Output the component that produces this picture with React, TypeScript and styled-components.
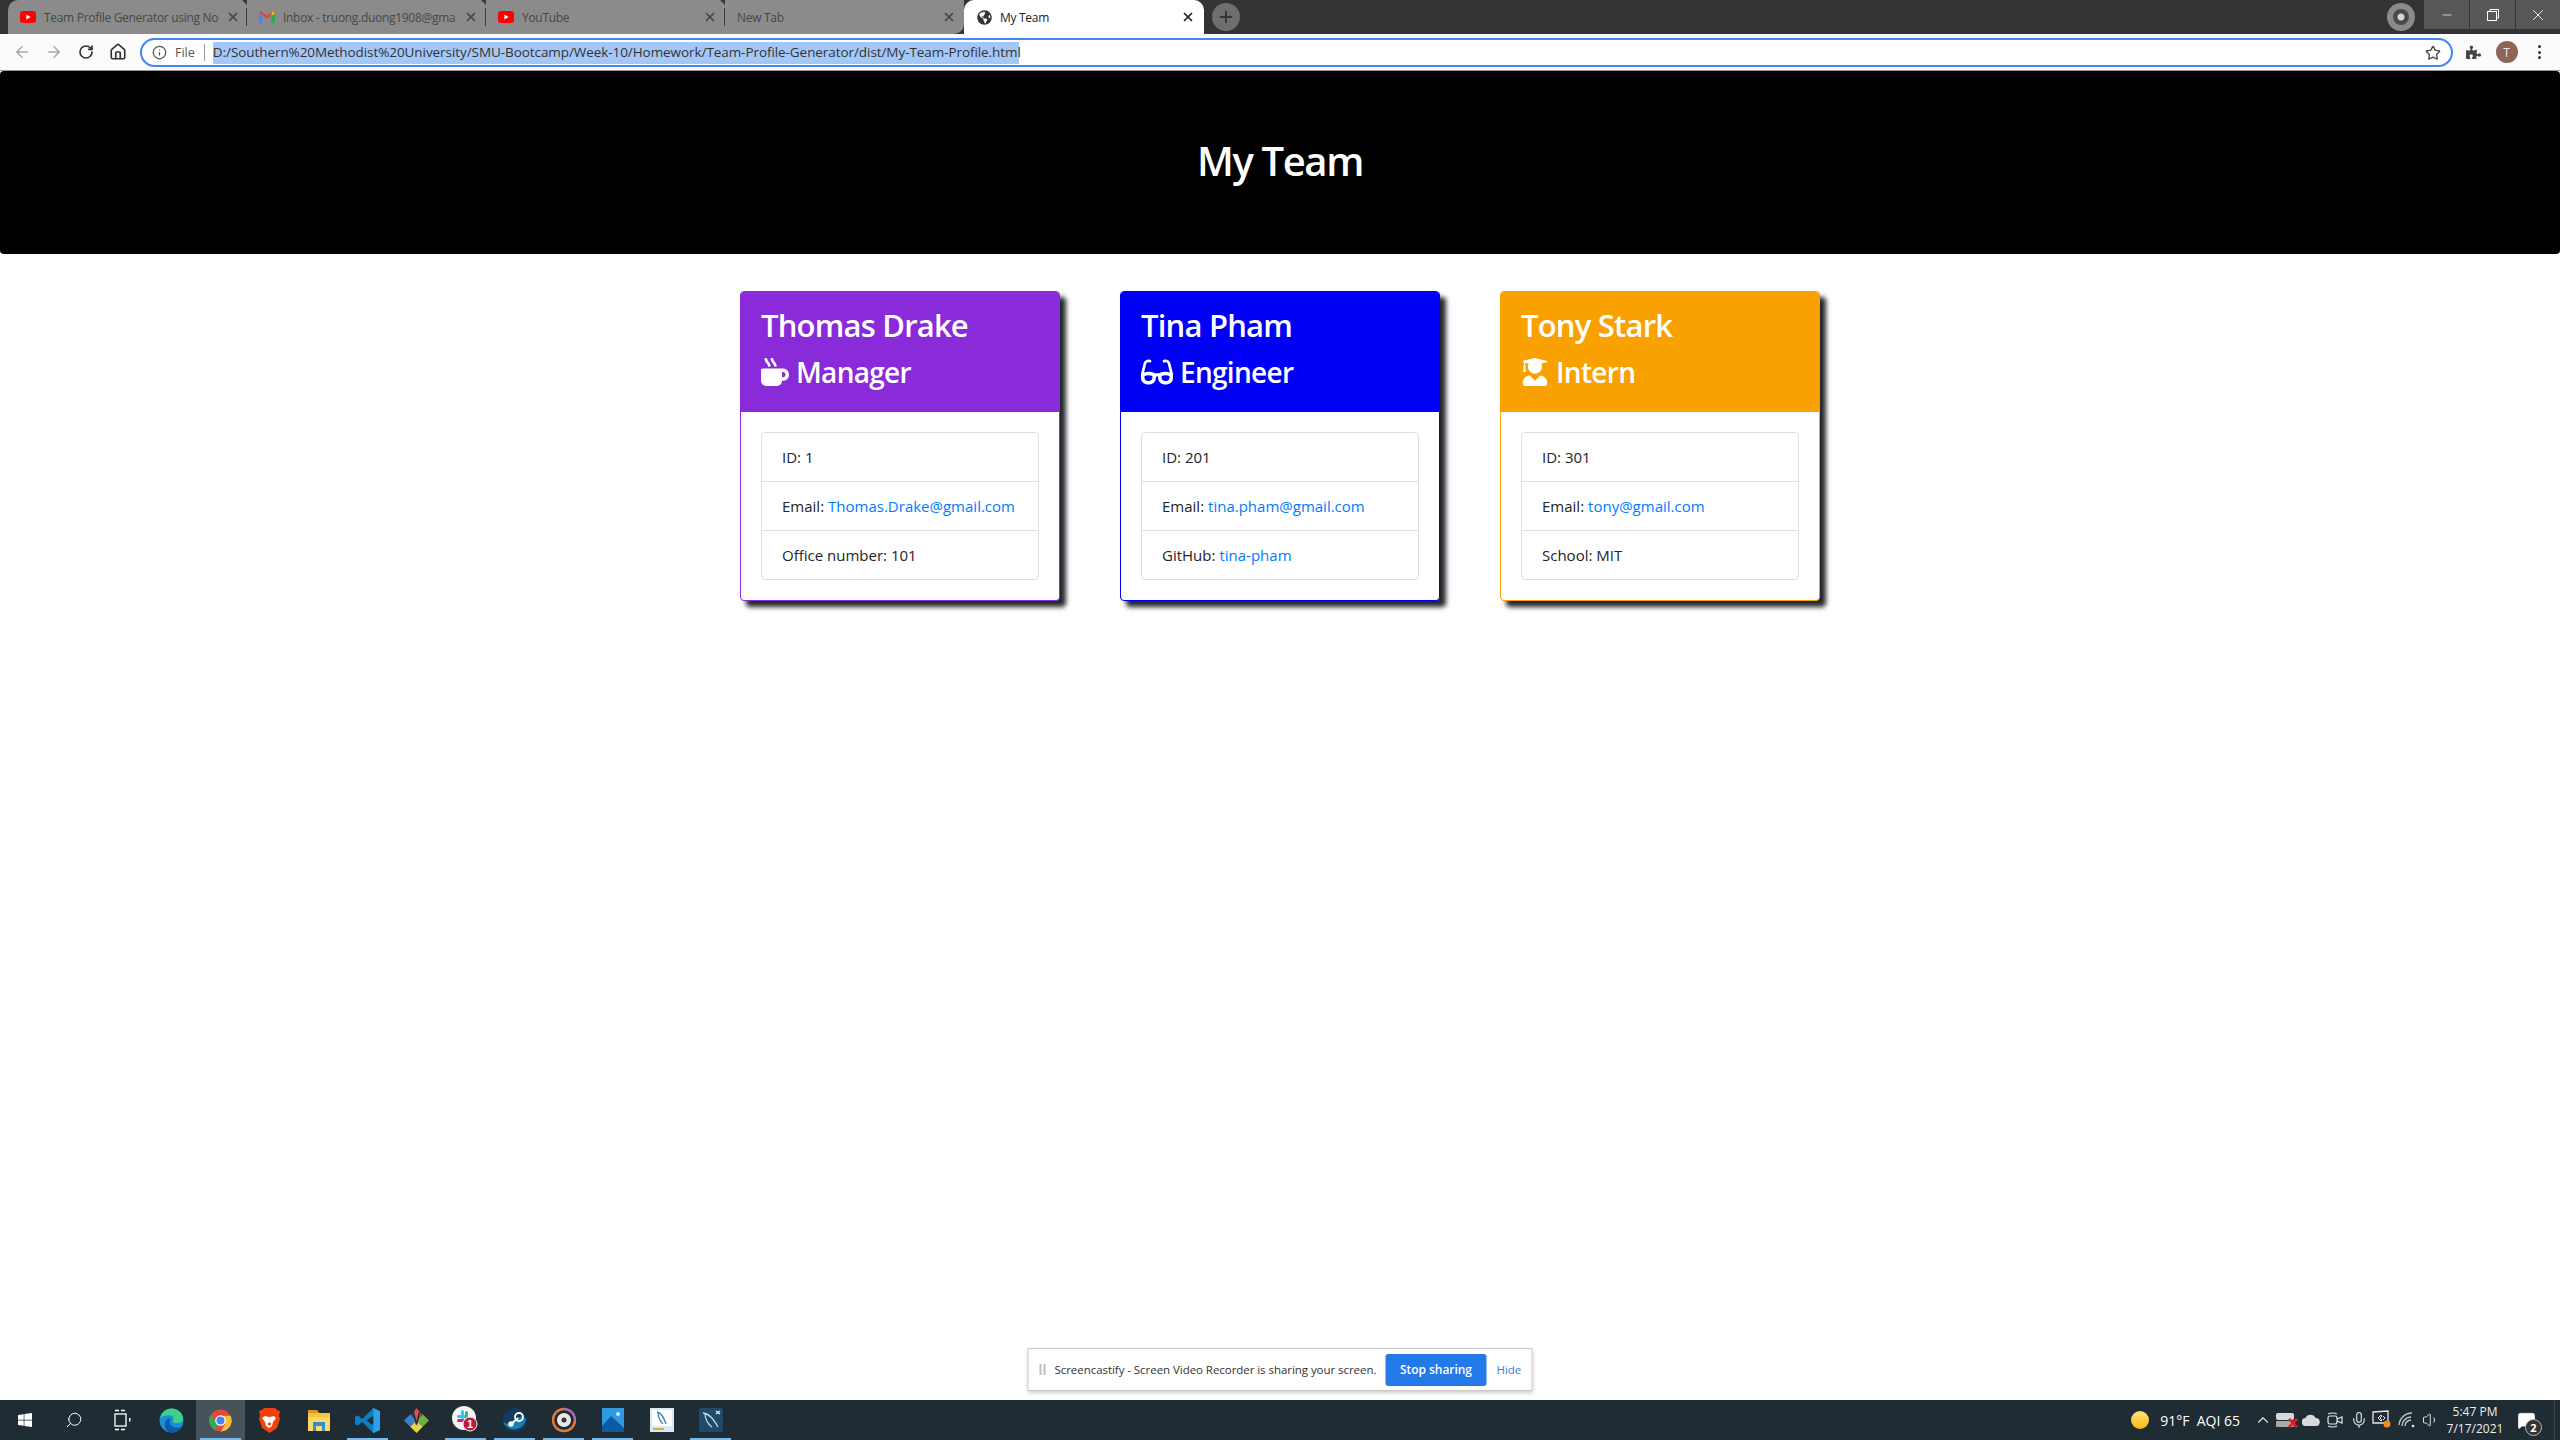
import React from 'react'
import styled, { createGlobalStyle } from 'styled-components'
import { FaMugHot, FaGlasses, FaUserGraduate, FaGlobeAmericas, FaPuzzlePiece, FaWindows } from 'react-icons/fa'
import { ArrowLeft, ArrowRight, RotateCw, Home, Info, Star, X, Plus, Minus, Search, ChevronUp, Mic, Volume1, MessageSquare } from 'lucide-react'

const FONT = '"Open Sans", "Noto Sans", "Liberation Sans", sans-serif'

const GlobalStyle = createGlobalStyle`
  html, body { margin: 0; padding: 0; background: #fff; }
  * { box-sizing: border-box; }
  body { font-family: ${FONT}; color: #212529; }
`

const Screen = styled.div`
  width: 2560px;
  height: 1440px;
  display: flex;
  flex-direction: column;
  overflow: hidden;
`

const TitleBar = styled.div`
  height: 34px;
  flex: none;
  display: flex;
  background: #333;
  padding-left: 8px;
`

const Tab = styled.div<{ $active?: boolean; $divider?: boolean }>`
  position: relative;
  width: ${p => (p.$active ? 240 : 239)}px;
  height: 34px;
  flex: none;
  display: flex;
  align-items: center;
  padding-left: 12px;
  padding-right: ${p => (p.$active ? 9 : 8)}px;
  gap: 8px;
  font-size: 12px;
  letter-spacing: -0.3px;
  color: ${p => (p.$active ? '#222' : '#474747')};
  background: ${p => (p.$active ? '#fff' : '#8b8b8b')};
  border-radius: ${p => (p.$active ? '10px 10px 0 0' : '0')};
  &:first-child { border-radius: 10px 0 0 0; }
  &:nth-child(4) { border-radius: 0 0 10px 0; }
  ${p =>
    p.$divider &&
    `&::after {
      content: '';
      position: absolute;
      right: 0;
      top: 8px;
      bottom: 8px;
      width: 1px;
      background: #3d3d3d;
    }
    &::before {
      content: '';
      position: absolute;
      right: -5px;
      top: 0;
      border: 5px solid transparent;
      border-top-color: #3a3a3a;
    }`}
`

const TabLabel = styled.span`
  flex: 1;
  white-space: nowrap;
`

const TabClose = styled(X)`
  flex: none;
  width: 14px;
  height: 14px;
  stroke-width: 3;
`

const Favicon = styled.span<{ $color?: string }>`
  flex: none;
  width: 16px;
  height: 16px;
  display: flex;
  align-items: center;
  justify-content: center;
  color: ${p => p.$color || '#333'};
`

const NewTabButton = styled.div`
  width: 28px;
  height: 28px;
  margin: 3px 0 0 8px;
  flex: none;
  border-radius: 50%;
  background: #6e6e6e;
  color: #333;
  display: flex;
  align-items: center;
  justify-content: center;
`

const TitleSpacer = styled.div`
  flex: 1;
`

const ProfileBadge = styled.div`
  width: 28px;
  height: 28px;
  margin: 3px 8px 0 0;
  border-radius: 50%;
  background: #8a8a8a;
  display: flex;
  align-items: center;
  justify-content: center;
  &::after {
    content: '';
    width: 16px;
    height: 16px;
    border-radius: 50%;
    background: radial-gradient(circle, #d5d5d5 0 3px, #4a4a4a 4px);
  }
`

const WindowButton = styled.div`
  width: 46px;
  height: 29px;
  background: #575757;
  border-left: 1px solid #333;
  color: #fff;
  display: flex;
  align-items: center;
  justify-content: center;
  &:last-child { width: 45px; }
`

const Toolbar = styled.div`
  height: 37px;
  flex: none;
  display: flex;
  align-items: flex-start;
  padding: 4px 6px 0;
  background: #fbfbfb;
  border-bottom: 1px solid #9a9a9a;
`

const ToolButton = styled.div<{ $color?: string; $width?: number }>`
  width: ${p => p.$width || 32}px;
  height: 28px;
  flex: none;
  display: flex;
  align-items: center;
  justify-content: center;
  color: ${p => p.$color || '#333'};
`

const Omnibox = styled.div`
  width: 2313px;
  height: 29px;
  flex: none;
  margin: 0 4px 0 6px;
  padding: 0 10px 0 10px;
  display: flex;
  align-items: center;
  background: #fff;
  border: 2.5px solid #4285f4;
  border-radius: 15px;
  font-size: 13px;
  color: #333;
`

const FileChip = styled.span`
  margin-left: 8px;
  padding-right: 9px;
  color: #555;
  font-size: 12.5px;
  border-right: 1px solid #999;
  line-height: 17px;
`

const UrlText = styled.span`
  margin-left: 8px;
  width: 806px;
  height: 22px;
  line-height: 21px;
  flex: none;
  background: #a3c8f7;
  white-space: nowrap;
  font-size: 13.5px;
  letter-spacing: -0.07px;
`

const Avatar = styled.div`
  width: 22px;
  height: 22px;
  border-radius: 50%;
  background: #8e6558;
  color: #eee;
  font-size: 12px;
  display: flex;
  align-items: center;
  justify-content: center;
`

const Dots = styled.div`
  display: flex;
  flex-direction: column;
  gap: 2.5px;
  span {
    width: 3px;
    height: 3px;
    border-radius: 50%;
    background: #333;
  }
`

const Banner = styled.header`
  height: 183px;
  flex: none;
  padding-bottom: 3px;
  background: #000;
  color: #fff;
  border-radius: 4px;
  display: flex;
  align-items: center;
  justify-content: center;
`

const PageTitle = styled.h1`
  margin: 0;
  font-size: 40px;
  font-weight: 600;
  line-height: 48px;
  letter-spacing: -1.4px;
`

const Main = styled.main`
  position: relative;
  flex: 1;
  background: #fff;
`

const CardRow = styled.section`
  display: flex;
  justify-content: center;
  gap: 60px;
  padding-top: 37px;
`

const Card = styled.article<{ $color: string }>`
  width: 320px;
  height: 310px;
  background: #fff;
  border: 1px solid ${p => p.$color};
  border-radius: 4px;
  box-shadow: 6px 6px 5px #23272b;
`

const CardHead = styled.div<{ $color: string }>`
  height: 120px;
  background: ${p => p.$color};
  color: #fff;
  padding: 12px 20px 0;
  border-radius: 3px 3px 0 0;
`

const Name = styled.h2`
  margin: 0 0 6px;
  font-size: 31px;
  line-height: 42px;
  font-weight: 600;
  letter-spacing: -0.8px;
  white-space: nowrap;
`

const Role = styled.h3`
  margin: 0;
  display: flex;
  align-items: center;
  gap: 7px;
  font-size: 28px;
  line-height: 40px;
  font-weight: 600;
  letter-spacing: -0.7px;
  svg { flex: none; }
`

const CardBody = styled.div`
  padding: 20px;
`

const InfoList = styled.ul`
  margin: 0;
  padding: 0;
  list-style: none;
  border: 1px solid rgba(0, 0, 0, 0.125);
  border-radius: 4px;
`

const InfoRow = styled.li`
  height: 49px;
  padding: 0 20px;
  display: flex;
  align-items: center;
  gap: 4px;
  font-size: 15px;
  white-space: nowrap;
  & + & { border-top: 1px solid rgba(0, 0, 0, 0.125); }
  &:first-child { height: 48px; }
`

const InfoLink = styled.a`
  color: #007bff;
  text-decoration: none;
`

const ShareBar = styled.div`
  position: absolute;
  left: 50%;
  bottom: 9px;
  transform: translateX(-50%);
  width: 505px;
  height: 43px;
  display: flex;
  align-items: center;
  padding: 0 11px 0 11px;
  background: #fff;
  border: 1px solid #c6c6c6;
  box-shadow: 0 2px 4px rgba(0, 0, 0, 0.2);
  font-size: 11.5px;
  letter-spacing: -0.05px;
  color: #333;
`

const Grip = styled.span`
  width: 6px;
  height: 11px;
  flex: none;
  margin-right: 9px;
  border-left: 2px solid #bbb;
  border-right: 2px solid #bbb;
`

const ShareText = styled.span`
  white-space: nowrap;
  width: 331px;
  flex: none;
`

const StopButton = styled.div`
  width: 101px;
  height: 32px;
  flex: none;
  background: #2479e8;
  color: #fff;
  border-radius: 3px;
  font-weight: 600;
  font-size: 12px;
  display: flex;
  align-items: center;
  justify-content: center;
`

const HideLink = styled.span`
  margin-left: 10px;
  color: #3b7de0;
`

const Taskbar = styled.footer`
  height: 40px;
  flex: none;
  display: flex;
  align-items: stretch;
  background: #1f2c33;
  color: #fff;
`

const TaskItem = styled.div<{ $running?: boolean; $active?: boolean }>`
  position: relative;
  width: 49px;
  flex: none;
  display: flex;
  align-items: center;
  justify-content: center;
  background: ${p => (p.$active ? '#46535a' : 'transparent')};
  ${p =>
    p.$running &&
    `&::after {
      content: '';
      position: absolute;
      left: 4px;
      right: 4px;
      bottom: 0;
      height: 2px;
      background: #76b9ed;
    }`}
`

const Tray = styled.div`
  margin-left: auto;
  display: flex;
  align-items: center;
  padding-right: 5px;
  font-size: 14px;
`

const Sun = styled.span`
  width: 18px;
  height: 18px;
  border-radius: 50%;
  background: linear-gradient(#ffe27a, #fdb813);
  margin-right: 11px;
`

const Weather = styled.span`
  margin-right: 11px;
  white-space: nowrap;
`

const TrayIcon = styled.span`
  width: 24px;
  flex: none;
  display: flex;
  align-items: center;
  justify-content: center;
  color: #e6e6e6;
`

const Clock = styled.div`
  width: 64px;
  text-align: center;
  font-size: 12px;
  line-height: 17px;
  color: #eee;
`

const Notify = styled.span`
  position: relative;
  width: 48px;
  padding-right: 8px;
  display: flex;
  align-items: center;
  justify-content: center;
  border-right: 1px solid #444;
  align-self: stretch;
`

const NotifyCount = styled.span`
  position: absolute;
  right: 12px;
  bottom: 4px;
  width: 17px;
  height: 17px;
  border-radius: 50%;
  background: #333;
  border: 1.5px solid #bbb;
  font-size: 11px;
  font-weight: 700;
  display: flex;
  align-items: center;
  justify-content: center;
`

const YouTubeIcon = () => (
  <svg width="16" height="12" viewBox="0 0 16 12">
    <rect width="16" height="12" rx="3" fill="#f00" />
    <path d="M6.4 3.4 10.6 6 6.4 8.6z" fill="#fff" />
  </svg>
)

const GmailIcon = () => (
  <svg width="16" height="12" viewBox="0 0 16 12">
    <path d="M0 1.5V12h3.5V5z" fill="#4285f4" />
    <path d="M16 1.5V12h-3.5V5z" fill="#34a853" />
    <path d="M0 1.5 8 7.5l8-6L14.5 0 8 4.8 1.5 0z" fill="#ea4335" />
    <path d="M12.5 2.2V5L16 2.5 14.5 0z" fill="#fbbc04" />
  </svg>
)

const EdgeIcon = () => (
  <svg width="25" height="25" viewBox="0 0 24 24">
    <circle cx="12" cy="12" r="11.5" fill="#1a8fd8" />
    <path d="M1 11C2 4 7 .5 12 .5c6 0 11 4.500 11 10 0 3-3 4-6 4-2.500 0-4-1-4-2.500 2-1 1-5-3-5-4 0-9 1.500-9 4z" fill="#3fd08a" />
    <path d="M9 23c-3-2-4-6-3-9 1-3 4-5 5-3-2 3 0 8 7 8 1 0 3-.5 4-1-2 4-9 7-13 5z" fill="#0c59a4" />
  </svg>
)

const ChromeIcon = () => (
  <svg width="23" height="23" viewBox="0 0 24 24">
    <circle cx="12" cy="12" r="11.500" fill="#e8453c" />
    <path d="M12 12 2 18a11.500 11.500 0 0 1 0-12l5 6z" fill="#34a853" />
    <path d="M2 18l5-6 5 0-5.500 10.500A11.500 11.500 0 0 1 2 18z" fill="#34a853" />
    <path d="M12 7h10.500a11.500 11.500 0 0 1-10 16.500L17 15z" fill="#fbc02d" />
    <circle cx="12" cy="12" r="5.500" fill="#fff" />
    <circle cx="12" cy="12" r="4.200" fill="#4285f4" />
  </svg>
)

const BraveIcon = () => (
  <svg width="21" height="25" viewBox="0 0 21 25">
    <path d="M5 0h11l2 2 3 1-1 5 1 3-3 9-7.500 5L3 20 0 11l1-3-1-5 3-1z" fill="#f1420b" />
    <path d="M6 8l4 1h1l4-1 2 2-3 4-1 4-3 2-3-2-1-4-3-4z" fill="#fff" />
    <path d="M10.500 14l-2 2 2 2 2-2z" fill="#f1420b" />
  </svg>
)

const FolderIcon = () => (
  <svg width="22" height="24" viewBox="0 0 22 24">
    <path d="M0 2h9l2 3h11v18H0z" fill="#f6c343" />
    <path d="M0 2h9l1.500 3H0z" fill="#d99a1c" />
    <rect x="0" y="9" width="22" height="14" fill="#ffd966" />
    <rect x="5" y="14" width="12" height="9" fill="#2f8fd0" />
    <rect x="8" y="18" width="6" height="5" fill="#ffd966" />
  </svg>
)

const VsCodeIcon = () => (
  <svg width="25" height="25" viewBox="0 0 24 24">
    <path d="M17.500 0 24 3v18l-6.500 3L7 13.500 2.500 17 0 15.500V8.500L2.500 7 7 10.500z" fill="#0a7fc9" />
    <path d="M17.500 0 24 3v18l-6.500 3z" fill="#2aa3ee" />
    <path d="M17.500 7.500 11 12l6.500 4.500z" fill="#1f2c33" />
  </svg>
)

const GitIcon = () => (
  <svg width="25" height="25" viewBox="0 0 24 24">
    <path d="M12 6 18 12 12 18 6 12z" fill="#27303a" />
    <path d="M6 6 12 12 6 18 0 12z" fill="#3f7fc9" />
    <path d="M18 6 24 12 18 18 12 12z" fill="#6fae3f" />
    <path d="M12 12 18 18 12 24 6 18z" fill="#e9d44a" />
    <path d="M12 0 17 6 12 12 8 6z" fill="#d9534f" />
    <path d="M9 4l3 12 3-12" stroke="#1f2c33" strokeWidth="1.500" fill="none" />
  </svg>
)

const SlackIcon = () => (
  <svg width="28" height="28" viewBox="0 0 28 28">
    <circle cx="12" cy="12" r="12" fill="#f3f3f3" />
    <rect x="5" y="9" width="9" height="3" rx="1.500" fill="#36c5f0" />
    <rect x="9" y="4" width="3" height="9" rx="1.500" fill="#36c5f0" />
    <rect x="13" y="5" width="3" height="8" rx="1.500" fill="#2eb67d" />
    <rect x="5" y="13" width="8" height="3" rx="1.500" fill="#e01e5a" />
    <rect x="11" y="14" width="3" height="7" rx="1.500" fill="#ecb22e" />
    <circle cx="18" cy="18" r="7" fill="#c2183f" stroke="#f3f3f3" />
    <text x="18" y="22" fontSize="11" fontWeight="700" fill="#fff" textAnchor="middle" fontFamily="Liberation Sans">1</text>
  </svg>
)

const SteamIcon = () => (
  <svg width="24" height="24" viewBox="0 0 24 24">
    <circle cx="12" cy="12" r="12" fill="#13395e" />
    <path d="M0 14l7 3 5-6 7-3 4 3a12 12 0 0 1-23 3z" fill="#1b7fb5" />
    <circle cx="16" cy="9" r="4" fill="none" stroke="#fff" strokeWidth="1.800" />
    <circle cx="8" cy="16" r="2.800" fill="#fff" />
    <path d="M8 16l7-6" stroke="#fff" strokeWidth="2" />
  </svg>
)

const DiscIcon = () => (
  <svg width="24" height="26" viewBox="0 0 24 26">
    <path d="M12 2a11 11 0 1 0 11 11" fill="none" stroke="#e07b3a" strokeWidth="2.500" />
    <path d="M23 13A11 11 0 0 0 12 2" fill="none" stroke="#a56bb5" strokeWidth="2.500" />
    <circle cx="12" cy="13" r="7" fill="#e8e8e8" />
    <circle cx="12" cy="13" r="2.500" fill="#333" />
  </svg>
)

const PhotosIcon = () => (
  <svg width="22" height="24" viewBox="0 0 22 24">
    <rect width="22" height="24" fill="#2f9ae0" />
    <path d="M0 18 9 8l13 12v4H0z" fill="#0b5aa3" />
    <circle cx="16" cy="6" r="2" fill="#cfe9fb" />
  </svg>
)

const SqlDocIcon = () => (
  <svg width="24" height="24" viewBox="0 0 24 24">
    <rect width="24" height="24" fill="#d9eaf3" />
    <rect x="2" y="2" width="20" height="16" fill="#fff" />
    <path d="M7 4c5 1 7 6 9 12M8 4c0 5 2 9 5 12" stroke="#3a87b7" strokeWidth="1.300" fill="none" />
    <rect x="3" y="20" width="11" height="2" fill="#e8a23d" />
  </svg>
)

const WorkbenchIcon = () => (
  <svg width="24" height="24" viewBox="0 0 24 24">
    <rect width="24" height="24" rx="2" fill="#1e4a6b" />
    <path d="M4 5c7 1 11 7 15 14M6 5c0 6 3 11 7 14" stroke="#c9d6de" strokeWidth="1.300" fill="none" />
    <path d="M17 3l4 3M21 3l-4 3" stroke="#e8e8e8" strokeWidth="1.500" />
  </svg>
)

const TaskViewIcon = () => (
  <svg width="17" height="22" viewBox="0 0 17 22" fill="none" stroke="#fff" strokeWidth="1.300">
    <path d="M1 1.500h4M7 1.500h4M1 20.500h4M7 20.500h4" />
    <rect x="1" y="5" width="11" height="12" />
    <rect x="15" y="9" width="1.500" height="3.500" fill="#fff" stroke="none" />
  </svg>
)

const MeetIcon = () => (
  <svg width="18" height="20" viewBox="0 0 18 20" fill="none" stroke="#e6e6e6" strokeWidth="1.200">
    <path d="M2 4a6 3 0 0 1 9 0M2 16a6 3 0 0 0 9 0" />
    <rect x="2" y="6" width="9" height="8" rx="2" />
    <path d="M11 9l5-2v6l-5-2" />
  </svg>
)

const NetworkIcon = () => (
  <svg width="24" height="20" viewBox="0 0 24 20">
    <rect x="1" y="3" width="18" height="7" rx="2" fill="#d8d8d8" />
    <rect x="1" y="11" width="18" height="6" rx="1" fill="#a9a9a9" />
    <path d="M14 9l8 8M22 9l-8 8" stroke="#e02020" strokeWidth="2.500" />
  </svg>
)

const CloudIcon = () => (
  <svg width="18" height="12" viewBox="0 0 18 12">
    <path d="M4 12a4 4 0 0 1-.5-8A5.500 5.500 0 0 1 13.500 4 4 4 0 0 1 14 12z" fill="#d9d9d9" />
  </svg>
)

const ScreenIcon = () => (
  <svg width="22" height="20" viewBox="0 0 22 20">
    <path d="M1 2l15-1v12H1z" fill="none" stroke="#e6e6e6" strokeWidth="1.300" />
    <path d="M6 8l3-3 1 1-2 2 2 2-1 1zM11 6l2 2-2 2" stroke="#e6e6e6" fill="none" />
    <circle cx="15" cy="14" r="3.500" fill="#f28c1e" />
  </svg>
)

const WifiIcon = () => (
  <svg width="18" height="16" viewBox="0 0 18 16" fill="none" stroke="#c8c8c8" strokeWidth="1.400">
    <path d="M1 13A13 13 0 0 1 14 1M4 14A9 9 0 0 1 13 5M7 14a6 6 0 0 1 6-6" />
    <circle cx="15" cy="14" r="1.300" fill="#e6e6e6" stroke="none" />
  </svg>
)

const members = [
  {
    name: 'Thomas Drake',
    role: 'Manager',
    color: '#8a2bd9',
    icon: <FaMugHot size={28} />,
    id: '1',
    email: 'Thomas.Drake@gmail.com',
    extraLabel: 'Office number: 101',
  },
  {
    name: 'Tina Pham',
    role: 'Engineer',
    color: '#0000f5',
    icon: <FaGlasses size={32} />,
    id: '201',
    email: 'tina.pham@gmail.com',
    extraLabel: 'GitHub:',
    extraLink: 'tina-pham',
  },
  {
    name: 'Tony Stark',
    role: 'Intern',
    color: '#f9a100',
    icon: <FaUserGraduate size={28} />,
    id: '301',
    email: 'tony@gmail.com',
    extraLabel: 'School: MIT',
  },
]

const tabs = [
  { title: 'Team Profile Generator using No', icon: <YouTubeIcon /> },
  { title: 'Inbox - truong.duong1908@gma', icon: <GmailIcon /> },
  { title: 'YouTube', icon: <YouTubeIcon /> },
  { title: 'New Tab', icon: null },
]

const App: React.FC = () => (
  <Screen>
    <GlobalStyle />
    <TitleBar>
      {tabs.map((tab, i) => (
        <Tab key={tab.title} $divider={i < 3}>
          {tab.icon && <Favicon>{tab.icon}</Favicon>}
          <TabLabel>{tab.title}</TabLabel>
          <TabClose />
        </Tab>
      ))}
      <Tab $active>
        <Favicon>
          <FaGlobeAmericas size={15} />
        </Favicon>
        <TabLabel>My Team</TabLabel>
        <TabClose />
      </Tab>
      <NewTabButton>
        <Plus size={18} strokeWidth={2.5} />
      </NewTabButton>
      <TitleSpacer />
      <ProfileBadge />
      <WindowButton>
        <Minus size={14} strokeWidth={1.2} />
      </WindowButton>
      <WindowButton>
        <svg width="12" height="12" viewBox="0 0 12 12" fill="none" stroke="#fff">
          <rect x="0.500" y="2.500" width="9" height="9" />
          <path d="M3 2.500V.5h8.500V9H9.500" />
        </svg>
      </WindowButton>
      <WindowButton>
        <X size={18} strokeWidth={1.2} />
      </WindowButton>
    </TitleBar>

    <Toolbar>
      <ToolButton $color="#a8a8a8">
        <ArrowLeft size={18} />
      </ToolButton>
      <ToolButton $color="#a8a8a8">
        <ArrowRight size={18} />
      </ToolButton>
      <ToolButton>
        <RotateCw size={16} strokeWidth={2.5} />
      </ToolButton>
      <ToolButton>
        <Home size={18} strokeWidth={2.2} />
      </ToolButton>
      <Omnibox>
        <Info size={15} color="#555" />
        <FileChip>File</FileChip>
        <UrlText>D:/Southern%20Methodist%20University/SMU-Bootcamp/Week-10/Homework/Team-Profile-Generator/dist/My-Team-Profile.html</UrlText>
        <TitleSpacer />
        <Star size={16} color="#444" />
      </Omnibox>
      <ToolButton $width={33}>
        <FaPuzzlePiece size={15} color="#444" />
      </ToolButton>
      <ToolButton $width={33}>
        <Avatar>T</Avatar>
      </ToolButton>
      <ToolButton $width={33}>
        <Dots>
          <span />
          <span />
          <span />
        </Dots>
      </ToolButton>
    </Toolbar>

    <Banner>
      <PageTitle>My Team</PageTitle>
    </Banner>

    <Main>
      <CardRow>
        {members.map(m => (
          <Card key={m.name} $color={m.color}>
            <CardHead $color={m.color}>
              <Name>{m.name}</Name>
              <Role>
                {m.icon}
                {m.role}
              </Role>
            </CardHead>
            <CardBody>
              <InfoList>
                <InfoRow>ID: {m.id}</InfoRow>
                <InfoRow>
                  Email: <InfoLink href="#">{m.email}</InfoLink>
                </InfoRow>
                <InfoRow>
                  {m.extraLabel} {m.extraLink && <InfoLink href="#">{m.extraLink}</InfoLink>}
                </InfoRow>
              </InfoList>
            </CardBody>
          </Card>
        ))}
      </CardRow>
      <ShareBar>
        <Grip />
        <ShareText>Screencastify - Screen Video Recorder is sharing your screen.</ShareText>
        <StopButton>Stop sharing</StopButton>
        <HideLink>Hide</HideLink>
      </ShareBar>
    </Main>

    <Taskbar>
      <TaskItem>
        <FaWindows size={16} />
      </TaskItem>
      <TaskItem>
        <Search size={18} strokeWidth={1.3} style={{ transform: 'scaleX(-1)' }} />
      </TaskItem>
      <TaskItem>
        <TaskViewIcon />
      </TaskItem>
      <TaskItem>
        <EdgeIcon />
      </TaskItem>
      <TaskItem $active $running>
        <ChromeIcon />
      </TaskItem>
      <TaskItem>
        <BraveIcon />
      </TaskItem>
      <TaskItem>
        <FolderIcon />
      </TaskItem>
      <TaskItem $running>
        <VsCodeIcon />
      </TaskItem>
      <TaskItem>
        <GitIcon />
      </TaskItem>
      <TaskItem $running>
        <SlackIcon />
      </TaskItem>
      <TaskItem $running>
        <SteamIcon />
      </TaskItem>
      <TaskItem $running>
        <DiscIcon />
      </TaskItem>
      <TaskItem $running>
        <PhotosIcon />
      </TaskItem>
      <TaskItem>
        <SqlDocIcon />
      </TaskItem>
      <TaskItem $running>
        <WorkbenchIcon />
      </TaskItem>
      <Tray>
        <Sun />
        <Weather>91°F&nbsp;&nbsp;AQI 65</Weather>
        <TrayIcon>
          <ChevronUp size={18} strokeWidth={1.5} />
        </TrayIcon>
        <TrayIcon>
          <NetworkIcon />
        </TrayIcon>
        <TrayIcon>
          <CloudIcon />
        </TrayIcon>
        <TrayIcon>
          <MeetIcon />
        </TrayIcon>
        <TrayIcon>
          <Mic size={18} strokeWidth={1.5} />
        </TrayIcon>
        <TrayIcon>
          <ScreenIcon />
        </TrayIcon>
        <TrayIcon>
          <WifiIcon />
        </TrayIcon>
        <TrayIcon>
          <Volume1 size={18} strokeWidth={1.3} />
        </TrayIcon>
        <Clock>
          5:47 PM
          <br />
          7/17/2021
        </Clock>
        <Notify>
          <MessageSquare size={19} fill="#fff" strokeWidth={1} />
          <NotifyCount>2</NotifyCount>
        </Notify>
      </Tray>
    </Taskbar>
  </Screen>
)

export default App
